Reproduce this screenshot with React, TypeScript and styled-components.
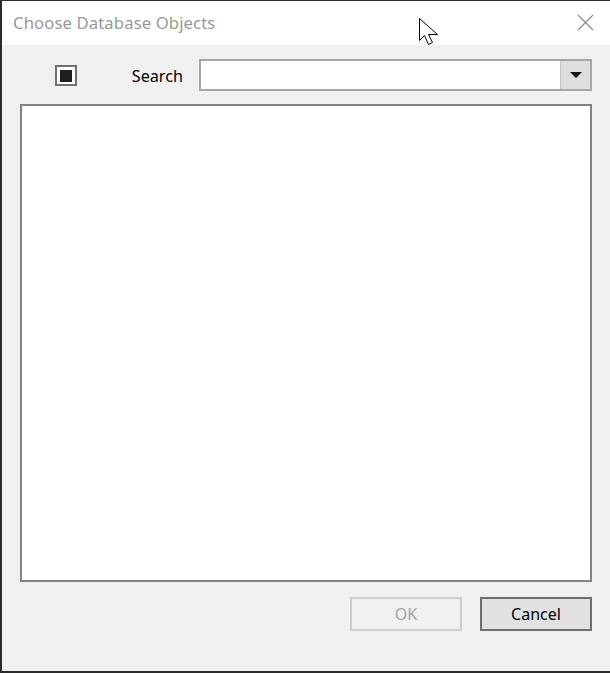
import React from "react";
import styled, { createGlobalStyle } from "styled-components";

const Global = createGlobalStyle`
  html, body { margin: 0; padding: 0; background: #f0f0f0; }
  body { font-family: "Noto Sans", "Open Sans", sans-serif; }
  * { box-sizing: border-box; }
`;

const Window = styled.div`
  position: relative;
  width: 610px;
  height: 673px;
  display: flex;
  flex-direction: column;
  background: #f0f0f0;
  border-top: 1px solid #2b2b2b;
  border-left: 2px solid #2b2b2b;
  border-bottom: 2px solid #2b2b2b;
  overflow: hidden;
`;

const TitleBar = styled.div`
  height: 44px;
  flex: none;
  background: #ffffff;
  display: flex;
  align-items: center;
  justify-content: space-between;
  padding: 0 16px 0 11px;
`;

const Title = styled.div`
  font-size: 16.7px;
  color: #999999;
  letter-spacing: 0.1px;
  margin-top: -1px;
`;

const CloseButton = styled.div`
  width: 17px;
  height: 17px;
  display: flex;
  align-items: center;
  justify-content: center;
  margin-top: -2px;
`;

const Body = styled.div`
  flex: 1;
  display: flex;
  flex-direction: column;
  padding: 14px 18px 0 18px;
`;

const SearchRow = styled.div`
  display: flex;
  align-items: center;
  height: 32px;
`;

const CheckBox = styled.div`
  width: 22px;
  height: 21px;
  margin-left: 35px;
  margin-top: 1px;
  border: 2px solid #707070;
  background: #ffffff;
  display: flex;
  align-items: center;
  justify-content: center;
`;

const CheckMark = styled.div`
  width: 12px;
  height: 12px;
  background: #1f1f1f;
`;

const Label = styled.div`
  width: 122px;
  text-align: right;
  padding-right: 16px;
  padding-top: 2px;
  font-size: 16.2px;
  color: #000000;
`;

const Combo = styled.div`
  flex: 1;
  height: 32px;
  display: flex;
  border: 2px solid #a6a6a6;
  background: #ffffff;
`;

const ComboInput = styled.div`
  flex: 1;
`;

const ComboButton = styled.div`
  width: 30px;
  background: #dedede;
  border-left: 1px solid #c4c4c4;
  display: flex;
  align-items: center;
  justify-content: center;
`;

const ListBox = styled.div`
  margin-top: 13px;
  height: 478px;
  border: 2px solid #828282;
  background: #ffffff;
`;

const ButtonRow = styled.div`
  margin-top: 15px;
  display: flex;
  justify-content: flex-end;
  gap: 18px;
`;

const Button = styled.div<{ $disabled?: boolean }>`
  width: 112px;
  height: 34px;
  display: flex;
  align-items: center;
  justify-content: center;
  font-size: 16px;
  border: 2px solid ${(p) => (p.$disabled ? "#cccccc" : "#6f6f6f")};
  background: ${(p) => (p.$disabled ? "#f0f0f0" : "#e1e1e1")};
  color: ${(p) => (p.$disabled ? "#a3a3a3" : "#000000")};
`;

const Cursor = styled.svg`
  position: absolute;
  left: 416px;
  top: 16px;
`;

export default function App() {
  return (
    <>
      <Global />
      <Window>
        <TitleBar>
          <Title>Choose Database Objects</Title>
          <CloseButton>
            <svg width="17" height="17" viewBox="0 0 17 17">
              <path d="M1 1 L16 16 M16 1 L1 16" stroke="#8a8a8a" strokeWidth="1.1" fill="none" />
            </svg>
          </CloseButton>
        </TitleBar>
        <Body>
          <SearchRow>
            <CheckBox>
              <CheckMark />
            </CheckBox>
            <Label>Search</Label>
            <Combo>
              <ComboInput />
              <ComboButton>
                <svg width="12" height="6" viewBox="0 0 12 6">
                  <path d="M0 0 L12 0 L6 6 Z" fill="#111" />
                </svg>
              </ComboButton>
            </Combo>
          </SearchRow>
          <ListBox />
          <ButtonRow>
            <Button $disabled>OK</Button>
            <Button>Cancel</Button>
          </ButtonRow>
        </Body>
        <Cursor width="22" height="30" viewBox="0 0 22 30">
          <path
            d="M1.5 1.5 L1.5 23.5 L6.5 18.5 L10.5 27.5 L14.5 25.5 L10.5 17.5 L19.5 17.5 Z"
            fill="#ffffff"
            stroke="#000000"
            strokeWidth="1"
            strokeLinejoin="miter"
          />
        </Cursor>
      </Window>
    </>
  );
}
